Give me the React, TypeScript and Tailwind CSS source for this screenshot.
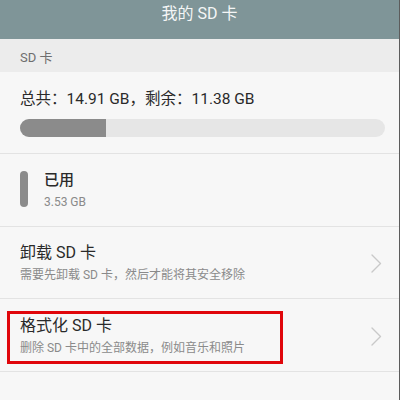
const font = { fontFamily: 'Roboto, "Noto Sans CJK SC", sans-serif' };

function Chevron() {
  return (
    <svg width="11" height="19" viewBox="0 0 11 19" className="mr-[-3px]">
      <polyline points="1,1 9.5,9.5 1,18" fill="none" stroke="#c9c9c9" strokeWidth="1.4" strokeLinecap="round" strokeLinejoin="round" />
    </svg>
  );
}

function ActionRow({
  title,
  desc,
  highlight,
  className,
}: {
  title: string;
  desc: string;
  highlight?: boolean;
  className: string;
}) {
  return (
    <div className={`relative flex items-center justify-between border-b border-[#e3e3e3] px-5 ${className}`}>
      <div>
        <p className="text-[16px] leading-[22px] text-[#2a2a2a]">{title}</p>
        <p className="mt-[2px] text-[12px] leading-[18px] text-[#8a8a8a]">{desc}</p>
      </div>
      <Chevron />
      {highlight && (
        <div className="pointer-events-none absolute left-[7px] top-[12px] h-[53px] w-[276px] border-[3px] border-[#e0060b]" />
      )}
    </div>
  );
}

export default function App() {
  return (
    <div className="h-[400px] w-[400px] overflow-hidden border-r border-[#5c5c5c] bg-[#f7f7f7]" style={font}>
      {/* title bar */}
      <div className="h-[39px] bg-[#7f9598]">
        <p className="text-center text-[16px] leading-[28px] text-[#f4f6f6]">我的 SD 卡</p>
      </div>

      {/* section label */}
      <div className="flex h-[33px] items-center bg-[#ececec] px-5 pt-[4px]">
        <span className="text-[13px] text-[#6e6e6e]">SD 卡</span>
      </div>

      {/* capacity */}
      <div className="border-b border-[#e3e3e3] px-5 pb-[16px] pt-[15px]">
        <p className="text-[15.5px] leading-[24px] text-[#2a2a2a]">总共：14.91 GB，剩余：11.38 GB</p>
        <div className="mt-[8px] h-[18px] w-[365px] overflow-hidden rounded-full bg-[#e6e6e6]">
          <div className="h-full bg-[#8b8b8b]" style={{ width: `${(3.53 / 14.91) * 100}%` }} />
        </div>
      </div>

      {/* used */}
      <div className="flex items-start gap-4 border-b border-[#e3e3e3] px-5 pb-[16px] pt-[16px]">
        <div className="mt-[1px] h-[36px] w-[8px] rounded-full bg-[#8b8b8b]" />
        <div>
          <p className="text-[15px] font-medium leading-[20px] text-[#2a2a2a]">已用</p>
          <p className="mt-[4px] text-[12px] leading-[16px] text-[#8a8a8a]">3.53 GB</p>
        </div>
      </div>

      <ActionRow
        title="卸载 SD 卡"
        desc="需要先卸载 SD 卡，然后才能将其安全移除"
        className="pb-[14px] pt-[15px]"
      />
      <ActionRow
        title="格式化 SD 卡"
        desc="删除 SD 卡中的全部数据，例如音乐和照片"
        highlight
        className="pb-[14px] pt-[16px]"
      />
    </div>
  );
}
